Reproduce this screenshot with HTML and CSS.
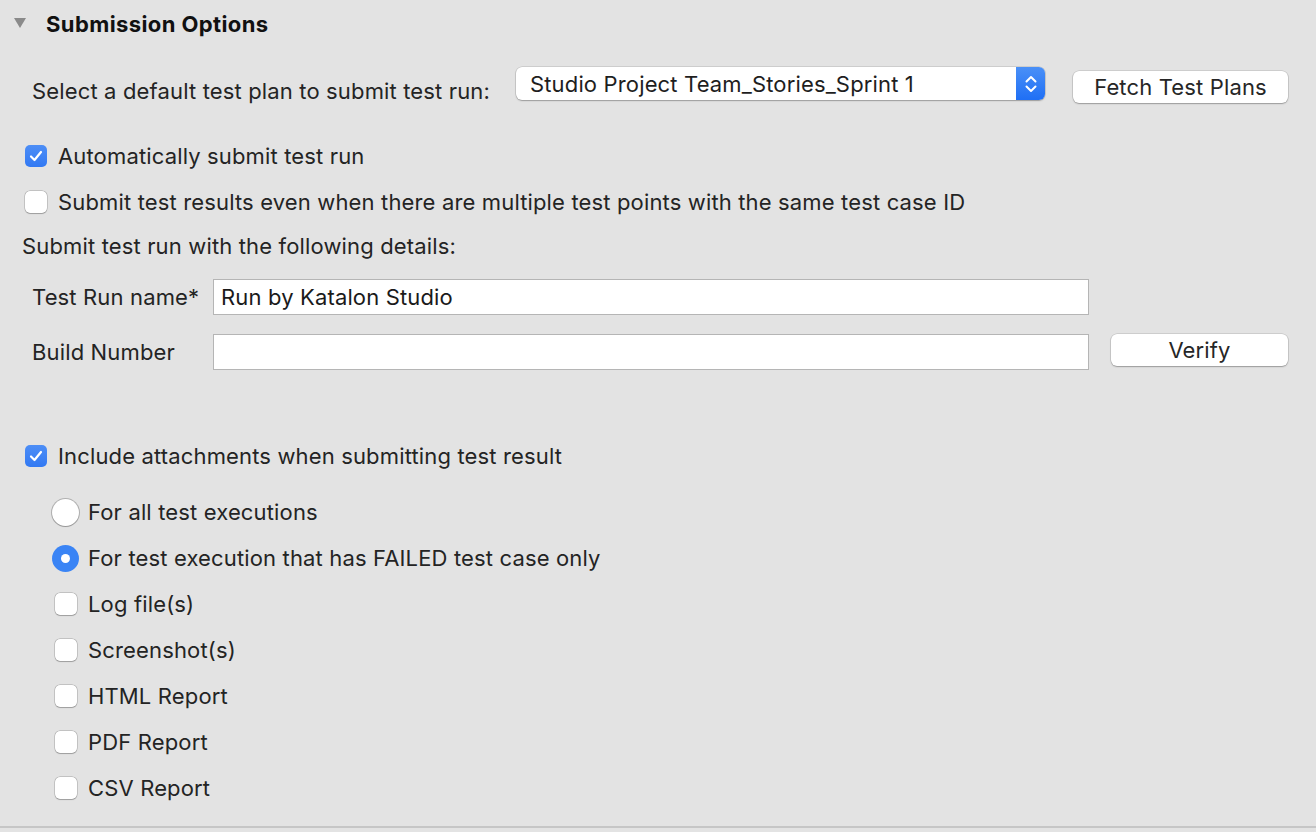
FILE: index.html
```html
<!DOCTYPE html>
<html>
<head>
<meta charset="utf-8">
<link rel="stylesheet" href="styles.css">
</head>
<body>
<div class="page">
  <div class="section-head">
    <span class="tri"></span>
    <span class="title">Submission Options</span>
  </div>

  <div class="plan-row">
    <span class="label">Select a default test plan to submit test run:</span>
    <div class="select">
      <span class="select-text">Studio Project Team_Stories_Sprint 1</span>
      <span class="stepper">
        <svg width="16" height="24" viewBox="0 0 16 24"><path d="M3.5 9.5 L8 5 L12.5 9.5 M3.5 14.5 L8 19 L12.5 14.5" fill="none" stroke="#fff" stroke-width="2" stroke-linecap="round" stroke-linejoin="round"/></svg>
      </span>
    </div>
    <button class="btn fetch">Fetch Test Plans</button>
  </div>

  <div class="check-row c1">
    <span class="cb checked"><svg width="14" height="12" viewBox="0 0 14 12"><path d="M2 6.5 L5.5 10 L12 2" fill="none" stroke="#fff" stroke-width="2.2" stroke-linecap="round" stroke-linejoin="round"/></svg></span>
    <span class="label">Automatically submit test run</span>
  </div>
  <div class="check-row c2">
    <span class="cb"></span>
    <span class="label">Submit test results even when there are multiple test points with the same test case ID</span>
  </div>
  <div class="details-label">Submit test run with the following details:</div>

  <div class="form">
    <div class="field-row r1">
      <span class="flabel">Test Run name*</span>
      <div class="input">Run by Katalon Studio</div>
    </div>
    <div class="field-row r2">
      <span class="flabel">Build Number</span>
      <div class="input"></div>
      <button class="btn verify">Verify</button>
    </div>
  </div>

  <div class="check-row c3">
    <span class="cb checked"><svg width="14" height="12" viewBox="0 0 14 12"><path d="M2 6.5 L5.5 10 L12 2" fill="none" stroke="#fff" stroke-width="2.2" stroke-linecap="round" stroke-linejoin="round"/></svg></span>
    <span class="label">Include attachments when submitting test result</span>
  </div>

  <div class="sub">
    <div class="radio-row">
      <span class="radio"></span>
      <span class="label">For all test executions</span>
    </div>
    <div class="radio-row">
      <span class="radio on"><span class="dot"></span></span>
      <span class="label">For test execution that has FAILED test case only</span>
    </div>
    <div class="sub-check"><span class="cb"></span><span class="label">Log file(s)</span></div>
    <div class="sub-check"><span class="cb"></span><span class="label">Screenshot(s)</span></div>
    <div class="sub-check"><span class="cb"></span><span class="label">HTML Report</span></div>
    <div class="sub-check"><span class="cb"></span><span class="label">PDF Report</span></div>
    <div class="sub-check"><span class="cb"></span><span class="label">CSV Report</span></div>
  </div>
</div>
<div class="bottom-line"></div>
</body>
</html>
```
FILE: styles.css
```css
html, body {
  margin: 0;
  padding: 0;
  background: #e3e3e3;
  width: 1316px;
  height: 832px;
  overflow: hidden;
  font-family: "Inter", "Liberation Sans", sans-serif;
  font-size: 22px;
  letter-spacing: 0.15px;
  color: #242424;
}
.page {
  height: 826px;
  box-sizing: border-box;
  display: flex;
  flex-direction: column;
}
.section-head {
  height: 48px;
  display: flex;
  align-items: center;
  padding-left: 14px;
}
.tri {
  width: 0;
  height: 0;
  border-left: 6px solid transparent;
  border-right: 6px solid transparent;
  border-top: 10px solid #8a8a8a;
  margin-right: 20px;
  margin-top: -2px;
}
.title {
  font-weight: 700;
  font-size: 22px;
  letter-spacing: 0.4px;
  color: #111;
}
.plan-row {
  display: flex;
  align-items: center;
  height: 40px;
  margin-top: 18px;
  padding-left: 32px;
}
.plan-row .label {
  width: 484px;
  margin-top: 10px;
}
.select {
  width: 529px;
  height: 33px;
  box-sizing: border-box;
  background: #fff;
  border-radius: 6px;
  box-shadow: 0 0 0 0.5px rgba(0,0,0,0.18), 0 1px 1.5px rgba(0,0,0,0.25);
  display: flex;
  align-items: center;
  justify-content: space-between;
  overflow: hidden;
  margin-top: -5px;
}
.select-text {
  padding-left: 14px;
  color: #1e1e1e;
}
.stepper {
  width: 29px;
  height: 33px;
  background: linear-gradient(#4a90f7, #1f6ff5);
  display: flex;
  align-items: center;
  justify-content: center;
}
.btn {
  font-family: inherit;
  font-size: 22px;
  letter-spacing: 0.15px;
  color: #262626;
  background: #fff;
  border: none;
  border-radius: 6px;
  box-shadow: 0 0 0 0.5px rgba(0,0,0,0.18), 0 1px 1.5px rgba(0,0,0,0.25);
  height: 32px;
  padding: 0;
}
.fetch {
  width: 215px;
  margin-left: 28px;
  margin-top: 2px;
}
.check-row {
  display: flex;
  align-items: center;
  height: 46px;
  padding-left: 25px;
}
.c1 { margin-top: 27px; }
.cb {
  width: 22px;
  height: 22px;
  box-sizing: border-box;
  border-radius: 5px;
  background: #fff;
  box-shadow: 0 0 0 0.5px rgba(0,0,0,0.25), 0 0.5px 1px rgba(0,0,0,0.2);
  display: inline-flex;
  align-items: center;
  justify-content: center;
  margin-right: 11px;
  flex: none;
}
.cb.checked {
  background: linear-gradient(#4d8ef6, #3279f3);
  box-shadow: none;
}
.details-label {
  padding-left: 22px;
  height: 38px;
  display: flex;
  align-items: center;
  margin-top: 2px;
}
.form {
  padding-left: 32px;
  margin-top: 14px;
  display: flex;
  flex-direction: column;
  gap: 19px;
}
.field-row {
  display: flex;
  align-items: center;
  height: 36px;
}
.flabel {
  width: 181px;
}
.input {
  width: 876px;
  height: 36px;
  box-sizing: border-box;
  background: #fff;
  border: 1px solid #b5b5b5;
  padding-left: 7px;
  display: flex;
  align-items: center;
  color: #1a1a1a;
}
.verify {
  width: 177px;
  margin-left: 22px;
  margin-top: -4px;
}
.c3 { margin-top: 63px; }
.sub {
  padding-left: 52px;
  margin-top: 10px;
  display: flex;
  flex-direction: column;
}
.radio-row {
  display: flex;
  align-items: center;
  height: 46px;
}
.radio {
  width: 27px;
  height: 27px;
  box-sizing: border-box;
  border-radius: 50%;
  background: #fff;
  box-shadow: 0 0 0 1px rgba(0,0,0,0.22), 0 1px 1px rgba(0,0,0,0.15);
  margin-right: 9px;
  display: inline-flex;
  align-items: center;
  justify-content: center;
  flex: none;
}
.radio.on {
  background: #3a84f5;
  box-shadow: none;
}
.dot {
  width: 9px;
  height: 9px;
  border-radius: 50%;
  background: #fff;
}
.sub-check {
  display: flex;
  align-items: center;
  height: 46px;
  padding-left: 3px;
}
.bottom-line {
  height: 2px;
  background: #c6c6c6;
}
```
